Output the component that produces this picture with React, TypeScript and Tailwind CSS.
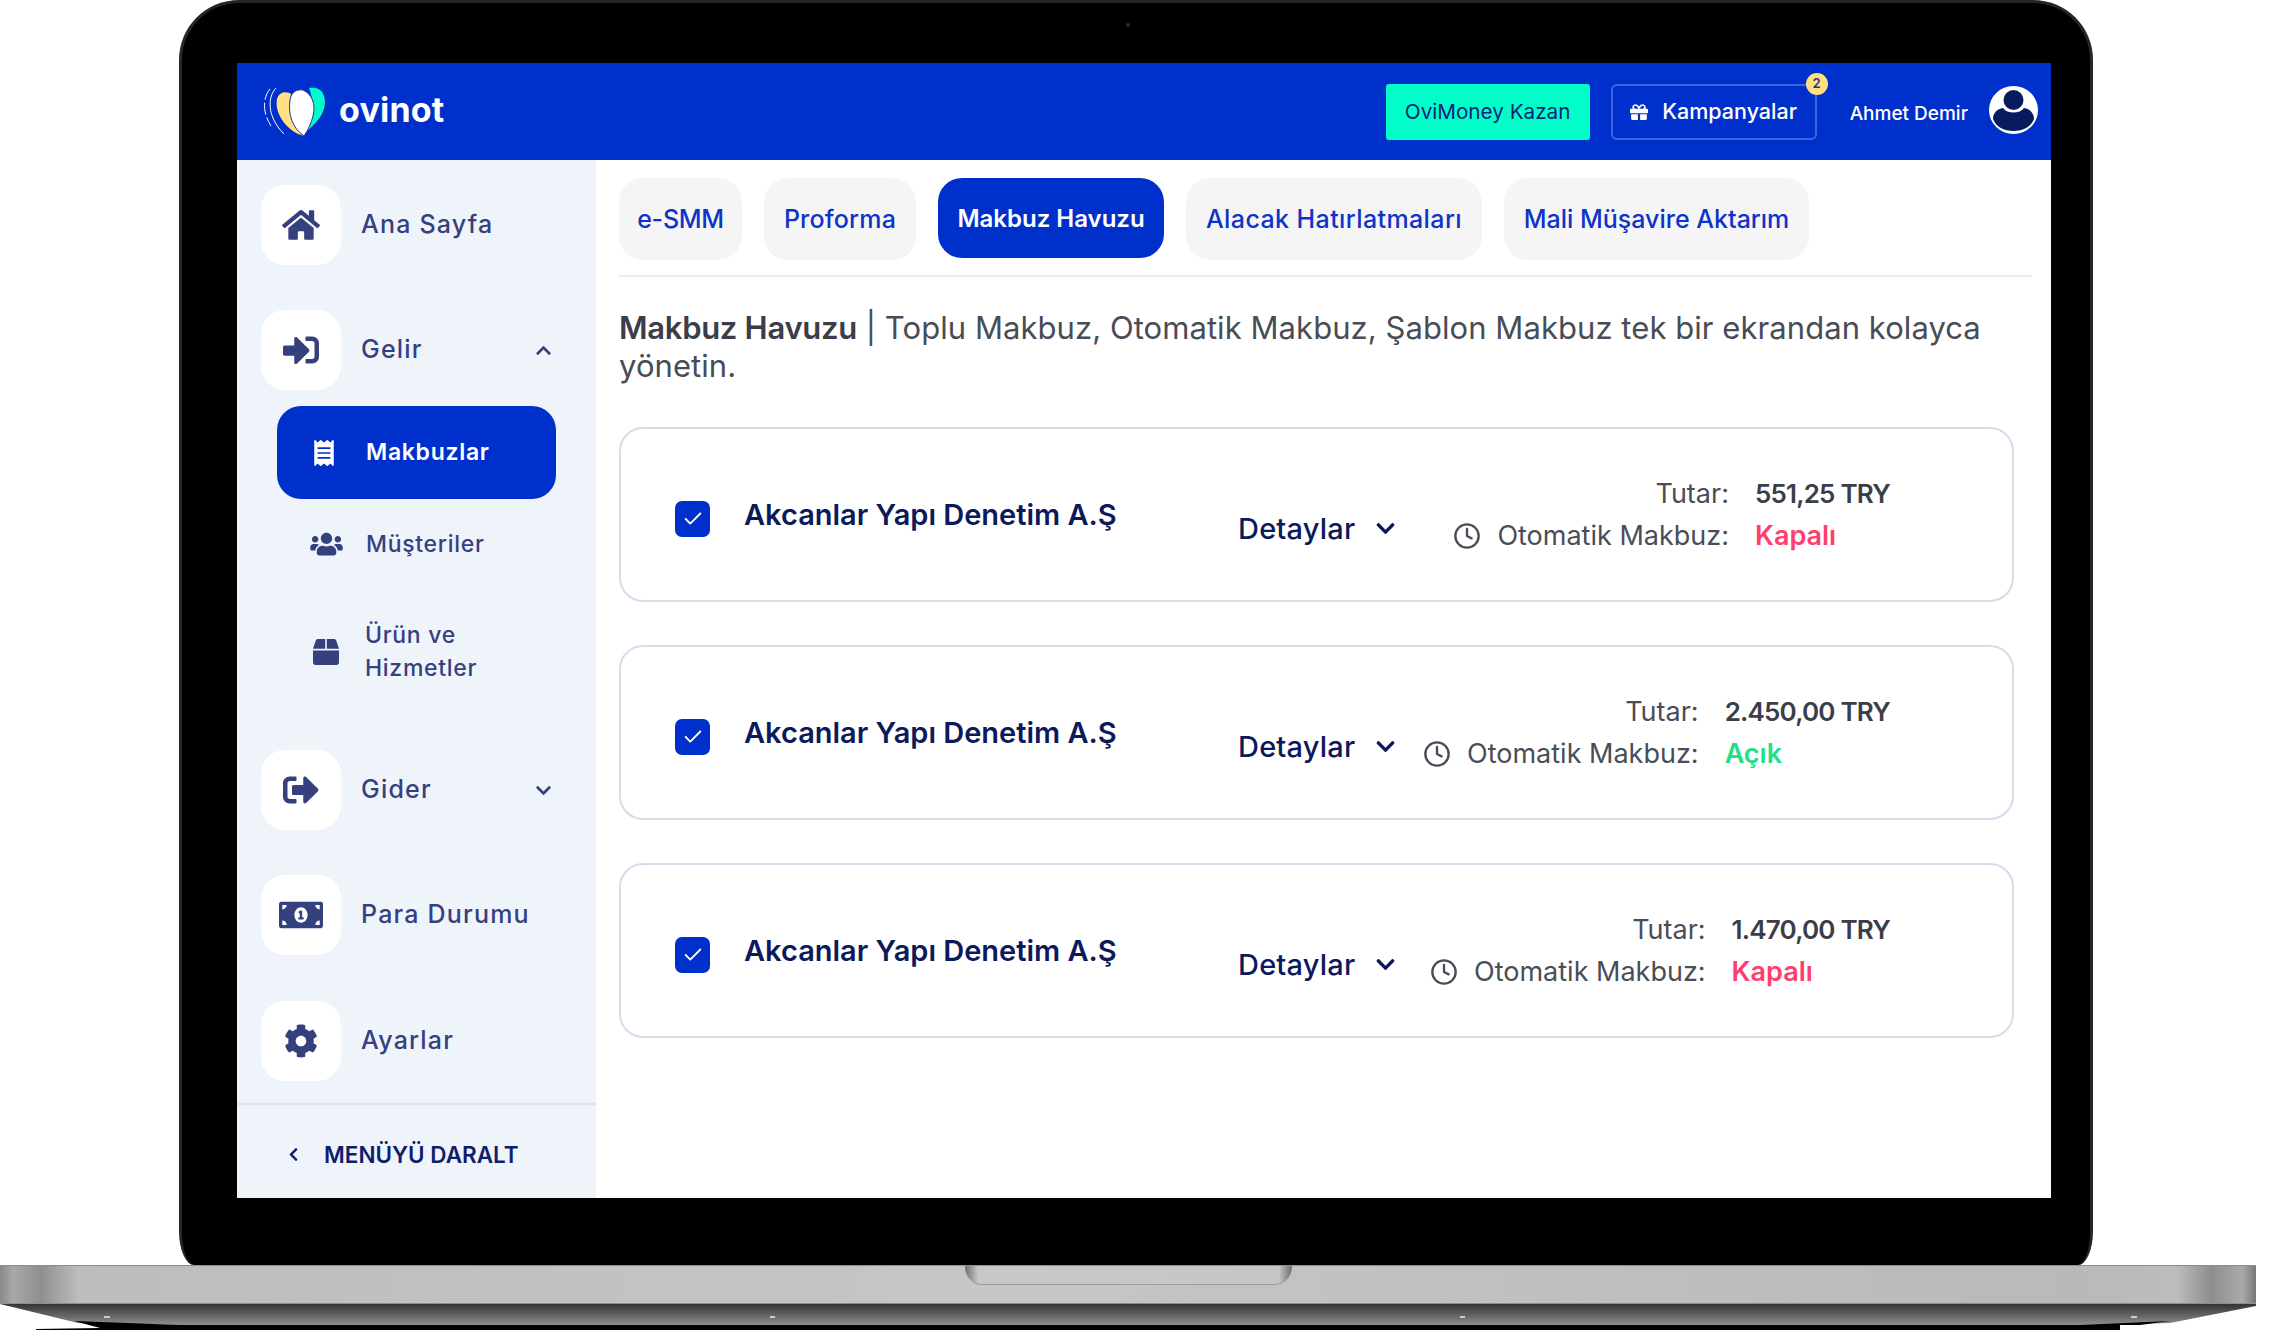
import React from "react";
import {
  FaHome,
  FaSignInAlt,
  FaSignOutAlt,
  FaReceipt,
  FaUsers,
  FaBox,
  FaMoneyBillAlt,
  FaCog,
  FaGift,
  FaChevronUp,
  FaChevronDown,
  FaChevronLeft,
} from "react-icons/fa";
import { Check, Clock } from "lucide-react";

const font = "font-['Inter','Liberation_Sans',sans-serif]";

const tabs = [
  { label: "e-SMM", className: "w-[123px] tracking-[-0.3px]" },
  { label: "Proforma", className: "w-[152px] tracking-[0.2px]" },
  { label: "Makbuz Havuzu", className: "w-[226px]", active: true },
  { label: "Alacak Hatırlatmaları", className: "w-[296px] tracking-[0.4px]" },
  { label: "Mali Müşavire Aktarım", className: "w-[305px]" },
];

const receipts = [
  { amount: "551,25 TRY", status: "Kapalı", open: false },
  { amount: "2.450,00 TRY", status: "Açık", open: true },
  { amount: "1.470,00 TRY", status: "Kapalı", open: false },
];

function Logo() {
  return (
    <svg width="64" height="52" viewBox="0 0 64 52" fill="none">
      <path d="M8 3C2 10 -1 24 9 40" stroke="#fff" strokeWidth="1" strokeDasharray="12 3" />
      <path d="M14 2C6 10 4 30 22 48" stroke="#fff" strokeWidth="1" />
      <path d="M44 46C56 36 66 24 62 10C60 3 54 1 47 2C52 14 52 32 44 46Z" fill="#00ffc8" />
      <path d="M42 50C26 46 12 28 15 13C17 5 26 5 29 8C26 22 30 38 42 50Z" fill="#ffe083" />
      <path d="M42 50C30 42 26 28 28 14C29 6 35 3 41 4C50 8 54 18 51 30C49 38 46 44 42 50Z" fill="#fff" stroke="#2a2a9a" strokeWidth="1" />
    </svg>
  );
}

function Avatar() {
  return (
    <svg width="49" height="48" viewBox="0 0 49 48" className="shrink-0">
      <ellipse cx="24.5" cy="24" rx="24.5" ry="24" fill="#fff" />
      <circle cx="24.5" cy="14" r="10" fill="#0a1a5f" />
      <path d="M4 33C4 27 8 23 14 22C18 28 31 28 35 22C41 23 45 27 45 33C42 41 34 45 24.5 45C15 45 7 41 4 33Z" fill="#0a1a5f" />
    </svg>
  );
}

function Header() {
  return (
    <header className="flex h-[97px] items-center bg-[#0030cc] pl-[25px] pr-[13px]">
      <Logo />
      <span className="mb-[4px] ml-[13px] text-[34px] font-bold leading-none tracking-[0.2px] text-white">ovinot</span>
      <button className="ml-auto h-[56px] w-[204px] rounded-[3px] bg-[#00ffc8] text-[20.7px] font-normal text-[#0b1f78]">
        OviMoney Kazan
      </button>
      <button className="relative ml-[21px] flex h-[56px] w-[206px] items-center justify-center gap-[14px] rounded-[6px] border-2 border-[#3f63dd] text-[21.5px] font-medium text-white">
        <FaGift className="h-[18px] w-[18px]" />
        Kampanyalar
        <span className="absolute right-[-13px] top-[-13px] flex h-[22px] w-[22px] items-center justify-center rounded-full bg-[#ffdf7e] text-[13px] font-semibold text-[#2a3478]">
          2
        </span>
      </button>
      <span className="ml-[33px] mt-[6px] text-[19px] font-medium text-white">Ahmet Demir</span>
      <span className="mb-[3px] ml-[21px] flex">
        <Avatar />
      </span>
    </header>
  );
}

function NavItem({
  icon,
  label,
  chevron,
  className,
}: {
  icon: React.ReactNode;
  label: string;
  chevron?: React.ReactNode;
  className?: string;
}) {
  return (
    <div className={`flex items-center pl-[24px] pr-[44px] text-[#35417f] ${className ?? ""}`}>
      <div className="flex h-[80px] w-[80px] shrink-0 items-center justify-center rounded-[24px] bg-white">{icon}</div>
      <span className="ml-[20px] text-[25px] font-medium tracking-[1.2px]">{label}</span>
      {chevron && <span className="ml-auto flex">{chevron}</span>}
    </div>
  );
}

function Sidebar() {
  return (
    <aside className="flex w-[359px] shrink-0 flex-col bg-[#eff4fb] pt-[25px]">
      <NavItem icon={<FaHome className="h-[38px] w-[38px]" />} label="Ana Sayfa" />
      <NavItem
        className="mt-[45px]"
        icon={<FaSignInAlt className="h-[36px] w-[36px]" />}
        label="Gelir"
        chevron={<FaChevronUp className="h-[17px] w-[17px]" />}
      />
      <div className="mx-[40px] mt-[16px] flex h-[93px] items-center rounded-[24px] bg-[#0030cc] pl-[36px] text-white">
        <FaReceipt className="h-[26px] w-[22px]" />
        <span className="ml-[31px] text-[23px] font-semibold tracking-[0.7px]">Makbuzlar</span>
      </div>
      <div className="mt-[22px] flex h-[46px] items-center pl-[73px] text-[#35417f]">
        <FaUsers className="h-[26px] w-[33px]" />
        <span className="ml-[23px] text-[23px] font-medium tracking-[0.7px]">Müşteriler</span>
      </div>
      <div className="mt-[52px] flex items-center pl-[76px] text-[#35417f]">
        <FaBox className="h-[26px] w-[26px]" />
        <span className="ml-[26px] text-[23px] font-medium leading-[33px] tracking-[0.7px]">
          Ürün ve
          <br />
          Hizmetler
        </span>
      </div>
      <NavItem
        className="mt-[65px]"
        icon={<FaSignOutAlt className="h-[36px] w-[36px]" />}
        label="Gider"
        chevron={<FaChevronDown className="h-[17px] w-[17px]" />}
      />
      <NavItem className="mt-[45px]" icon={<FaMoneyBillAlt className="h-[44px] w-[44px]" />} label="Para Durumu" />
      <NavItem className="mt-[46px]" icon={<FaCog className="h-[34px] w-[34px]" />} label="Ayarlar" />
      <div className="mt-auto flex h-[95px] items-center border-t-2 border-[#dde3f0] pl-[50px] pt-[6px] text-[#0f1e6b]">
        <FaChevronLeft className="h-[15px] w-[13px]" />
        <span className="ml-[24px] text-[22.5px] font-semibold">MENÜYÜ DARALT</span>
      </div>
    </aside>
  );
}

function ReceiptCard({ amount, status, open }: { amount: string; status: string; open: boolean }) {
  return (
    <div className="flex h-[175px] items-center rounded-[24px] border-2 border-[#d5dcea] pl-[54px] pr-[122px]">
      <div className="mt-[9px] flex h-[36px] w-[35px] shrink-0 items-center justify-center rounded-[7px] bg-[#0030cc] text-white">
        <Check className="h-[22px] w-[22px]" strokeWidth={2} />
      </div>
      <span className="ml-[34px] w-[494px] shrink-0 text-[29px] font-semibold text-[#0c1a5c]">
        Akcanlar Yapı Denetim A.Ş
      </span>
      <div className="mt-[28px] flex shrink-0 items-center text-[#0c1a5c]">
        <span className="text-[29px] font-medium tracking-[0.2px]">Detaylar</span>
        <FaChevronDown className="ml-[20px] h-[21px] w-[21px]" />
      </div>
      <div className="ml-auto grid grid-cols-[auto_auto] items-center gap-x-[26px] gap-y-[8px] text-[27px] leading-[34px] text-[#4a4d57]">
        <span className="justify-self-end">Tutar:</span>
        <span className="text-[26px] font-semibold tracking-[-0.8px] text-[#3b3d48]">{amount}</span>
        <span className="flex items-center justify-self-end">
          <Clock className="mr-[16px] h-[28px] w-[28px]" strokeWidth={2} />
          Otomatik Makbuz:
        </span>
        <span className={`font-semibold ${open ? "text-[#1fe084]" : "text-[#ff3d6e]"}`}>{status}</span>
      </div>
    </div>
  );
}

function Content() {
  return (
    <main className="flex min-w-0 flex-1 flex-col bg-white pl-[23px] pr-[19px] pt-[18px]">
      <nav className="flex gap-[22px] border-b-2 border-[#e8ebf3] pb-[15px]">
        {tabs.map((tab) => (
          <div
            key={tab.label}
            className={
              tab.active
                ? `flex h-[80px] items-center justify-center rounded-[24px] bg-[#0030cc] pt-[2px] text-[24px] font-semibold text-white ${tab.className}`
                : `flex h-[82px] items-center justify-center rounded-[24px] bg-[#f5f5f5] pt-[2px] text-[25px] font-medium text-[#0f33c9] ${tab.className}`
            }
          >
            {tab.label}
          </div>
        ))}
      </nav>
      <p className="mt-[32px] whitespace-nowrap text-[31px] leading-[38px] tracking-[0.06px] text-[#494c55]">
        <span className="font-semibold tracking-[-0.3px] text-[#3b3d48]">Makbuz Havuzu</span> | Toplu Makbuz, Otomatik
        Makbuz, Şablon Makbuz tek bir ekrandan kolayca
        <br />
        yönetin.
      </p>
      <div className="mr-[18px] mt-[42px] flex flex-col gap-[43px]">
        {receipts.map((r, i) => (
          <ReceiptCard key={i} {...r} />
        ))}
      </div>
    </main>
  );
}

function LaptopBase() {
  return (
    <div className="w-[2256px]">
      <div className="flex h-[39px] justify-center border-y border-[#8d8d8d] bg-[linear-gradient(to_right,#8a8a8a_0%,#a8a8a8_0.6%,#8f8f8f_1.8%,#bdbdbd_3.5%,#c6c6c6_45%,#b9b9b9_92%,#bcbcbc_96.5%,#8e8e8e_98%,#a9a9a9_99.4%,#777_100%)]">
        <div className="h-[19px] w-[327px] rounded-b-[18px] border-b border-[#9a9a9a] bg-[linear-gradient(to_right,#6d6d6d_0%,#c8c8c8_4%,#c6c6c6_96%,#6d6d6d_100%)]" />
      </div>
      <svg width="2256" height="27" viewBox="0 0 2256 27" className="block">
        <defs>
          <linearGradient id="under" x1="0" y1="0" x2="0" y2="1">
            <stop offset="0" stopColor="#333" />
            <stop offset="1" stopColor="#8f8f8f" />
          </linearGradient>
        </defs>
        <path d="M0 0H2256V2L2170 19L2100 21H180L78 19Z" fill="url(#under)" />
        <path d="M74 17L180 21H2080L2170 17L2140 21H2120V26H36V25L100 24Z" fill="#000" />
        <rect x="182" y="21" width="1938" height="5" fill="#000" />
        <rect x="104" y="12" width="6" height="2" fill="#ccc" />
        <rect x="770" y="12" width="5" height="2" fill="#ccc" />
        <rect x="1460" y="12" width="5" height="2" fill="#ccc" />
        <rect x="2131" y="12" width="6" height="2" fill="#ccc" />
      </svg>
    </div>
  );
}

export default function App() {
  return (
    <div className={`h-[1332px] w-[2288px] overflow-hidden bg-white ${font}`}>
      <div className="relative ml-[179px] h-[1265px] w-[1914px] rounded-t-[60px] rounded-bl-[15px_34px] rounded-br-[15px_34px] border-x-[3px] border-t-[3px] border-[#262626] bg-black pl-[55px] pr-[39px] pt-[60px]">
        {/* camera */}
        <span className="absolute left-[944px] top-[20px] h-[4px] w-[4px] rounded-full bg-[#2b2b2b]" />
        <div className="flex h-[1135px] w-[1814px] flex-col">
          <Header />
          <div className="flex min-h-0 flex-1">
            <Sidebar />
            <Content />
          </div>
        </div>
      </div>
      <LaptopBase />
    </div>
  );
}
